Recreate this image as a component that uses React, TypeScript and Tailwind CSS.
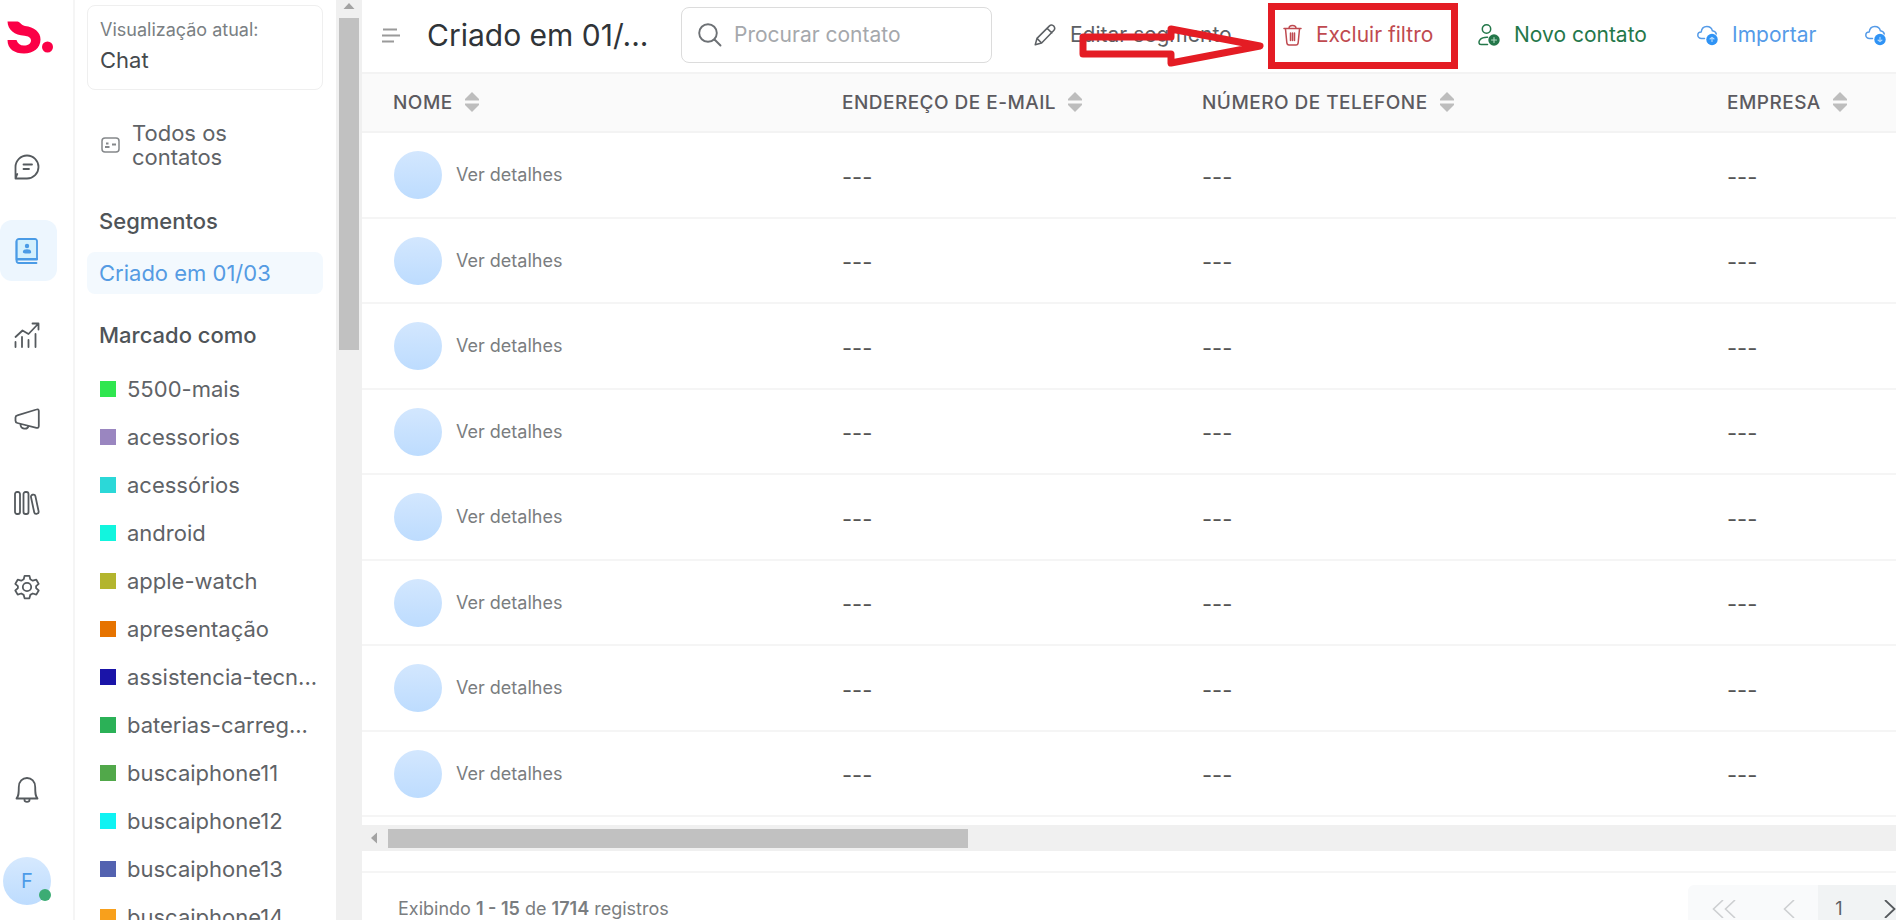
import { useState } from 'react';
import type { ReactNode } from 'react';

const tags = [
  { name: '5500-mais', color: '#2fe64f' },
  { name: 'acessorios', color: '#9a86c0' },
  { name: 'acessórios', color: '#2bd8d8' },
  { name: 'android', color: '#12f5de' },
  { name: 'apple-watch', color: '#b3b52e' },
  { name: 'apresentação', color: '#e67300' },
  { name: 'assistencia-tecn...', color: '#1a14a8' },
  { name: 'baterias-carreg...', color: '#2bb157' },
  { name: 'buscaiphone11', color: '#51a84a' },
  { name: 'buscaiphone12', color: '#0ff3f3' },
  { name: 'buscaiphone13', color: '#5362b0' },
  { name: 'buscaiphone14', color: '#f8a01c' },
];

const rows = [1, 2, 3, 4, 5, 6, 7, 8];

function Icon({ size = 26, children }: { size?: number; children: ReactNode }) {
  return (
    <svg width={size} height={size} viewBox="0 0 26 26" fill="none" stroke="currentColor" strokeWidth="1.8" strokeLinecap="round" strokeLinejoin="round" className="shrink-0" aria-hidden="true">
      {children}
    </svg>
  );
}

function Logo() {
  return (
    <svg width="46" height="34" viewBox="0 0 46 34" aria-hidden="true">
      <path d="M0.5 0.5H10.500C13 .8 14 4 18 5C27 6 33.500 11 33.500 18.500C33.500 27 26.500 32.500 17 32.500C7.500 32.500 .5 28 .5 19H9.500C10.500 22.500 13 24.500 17 24.500C21 24.500 24 22.500 24 19.500C24 16.500 21 15 17.500 14.700C7.500 14 .8 9 .5 .5Z" fill="#fb0046" />
      <circle cx="40.500" cy="26" r="5.500" fill="#fb0046" />
    </svg>
  );
}

function Cloud({ up }: { up?: boolean }) {
  return (
    <svg width="21" height="21" viewBox="0 0 21 21" fill="none" stroke="currentColor" strokeWidth="1.500" strokeLinecap="round" strokeLinejoin="round" className="shrink-0" aria-hidden="true">
      <path d="M7.500 13.500H4.500C2.300 13.500 .8 12 .8 10.200C.8 8.300 2.300 7 4.200 7C4.600 3.800 6.800 1.500 9.800 1.500C12.700 1.500 14.800 3.200 15.400 5.800C17.300 6 18.800 7.200 19.300 9" />
      <circle cx="15" cy="14.500" r="5.700" fill="#2f93f5" stroke="none" />
      {up ? <path d="M13 14L15 12.300L17 14M15 12.500V16.500" stroke="#b9dcfc" strokeWidth="1.100" /> : <path d="M13 15L15 16.700L17 15M15 12.300V16.500" stroke="#b9dcfc" strokeWidth="1.100" />}
    </svg>
  );
}

function Sort() {
  return (
    <svg width="14" height="20" viewBox="0 0 14 20" fill="#bdbdbd" className="shrink-0" aria-hidden="true">
      <path d="M7 0L14 7V8.500H0V7Z" />
      <path d="M7 20L14 13V11.500H0V13Z" />
    </svg>
  );
}

const navItems = [
  {
    label: 'Conversas',
    icon: <Icon><path d="M1.500 24.500V13A11.500 11.500 0 1 1 13 24.500H1.500L3.300 20M9.500 10.500H18M9.500 15H15" /></Icon>,
  },
  {
    label: 'Contatos',
    icon: (
      <Icon>
        <path d="M23 21.500V3A2 2 0 0 0 21 1H5A2.500 2.500 0 0 0 2.500 3.500V21.500Z" fill="#d3f0fd" />
        <path d="M2.500 3.500V22.500A2.500 2.500 0 0 0 5 25H22.500M2.500 22.500A2 2 0 0 1 4.500 21H23" />
        <circle cx="13" cy="8" r="2.200" fill="currentColor" stroke="none" />
        <path d="M8.800 14C8.800 12 10.800 11.300 13 11.300S17.200 12 17.200 14S15 15.500 13 15.500S8.800 15.500 8.800 14Z" fill="currentColor" stroke="none" />
      </Icon>
    ),
  },
  {
    label: 'Relatórios',
    icon: <Icon><path d="M1.500 15L8.500 8.500L14.500 12L24.500 1.500M18.500 1.500H24.500V7.500M1.500 20V25M8 15V25M14.500 18V25M21.500 12V25" /></Icon>,
  },
  {
    label: 'Campanhas',
    icon: <Icon><path d="M1.500 11.500C1.500 10.200 2 9.600 3.300 9.300L22.500 3.500C24 3 24.800 3.500 24.800 5V20C24.800 21.500 24 22.200 22.500 21.800L3.300 17C2 16.700 1.500 16 1.500 14.800ZM6.500 18.200C6.500 23.500 13.500 24 14.500 20" /></Icon>,
  },
  {
    label: 'Biblioteca',
    icon: (
      <Icon>
        <rect x="1" y="2" width="5" height="22" rx="2" />
        <rect x="9.500" y="2" width="5" height="22" rx="2" />
        <rect x="18.500" y="4.500" width="4.500" height="19.500" rx="2" transform="rotate(-12 20.700 14)" />
      </Icon>
    ),
  },
  {
    label: 'Configurações',
    icon: (
      <Icon>
        <circle cx="13" cy="13" r="4.200" />
        <path d="M10.600 1.800H15.400L16.300 5.300L18.800 6.700L22.300 5.700L24.700 9.900L22.100 12.200V14.200L24.700 16.500L22.300 20.600L18.800 19.500L16.300 20.900L15.400 24.300H10.600L9.700 20.900L7.200 19.500L3.700 20.600L1.300 16.500L3.900 14.200V12.200L1.300 9.900L3.700 5.700L7.200 6.700L9.700 5.300Z" />
      </Icon>
    ),
  },
];

function Rail() {
  return (
    <nav className="flex h-full w-[75px] shrink-0 flex-col border-r-2 border-[#f5f5f5] text-[#555a5e]">
      <a href="#" aria-label="Início" className="ml-[7px] mt-[21px] block">
        <Logo />
      </a>
      <div className="mt-[81px] flex flex-col gap-[23px]">
        {navItems.map((item, i) => (
          <button
            key={item.label}
            aria-label={item.label}
            className={`flex h-[61px] w-[57px] items-center justify-center rounded-xl pr-1 ${i === 1 ? 'bg-[#edf6fe] text-[#4a9be6]' : ''}`}
          >
            {item.icon}
          </button>
        ))}
      </div>
      <div className="mb-[15px] mt-auto flex w-[54px] flex-col items-center gap-[54px]">
        <button aria-label="Notificações">
          <Icon><path d="M2.500 21.500C4.500 19.500 4.800 17.500 4.800 10C4.800 4.500 8.500 1 13 1S21.200 4.500 21.200 10C21.200 17.500 21.500 19.500 23.500 21.500ZM10.500 22V23C10.500 25.500 15.500 25.500 15.500 23V22" /></Icon>
        </button>
        <button aria-label="Perfil" className="relative h-12 w-12 rounded-full bg-linear-to-b from-[#d6e9fe] to-[#bddcfe] text-xl text-[#4c9be8]">
          F
          <span className="absolute bottom-1 right-0 h-3 w-3 rounded-full bg-[#3cac74]" />
        </button>
      </div>
    </nav>
  );
}

function Sidebar() {
  return (
    <aside className="flex h-full w-[287px] shrink-0">
      <div className="min-w-0 flex-1 overflow-hidden pl-3 pr-[13px] text-[22px] text-[#5f6367]">
        <div className="mt-[5px] h-[85px] rounded-lg border border-[#efefef] px-3 pt-3">
          <p className="text-lg leading-6 text-[#7a7f83]">Visualização atual:</p>
          <p className="leading-9 text-[#45494d]">Chat</p>
        </div>
        <a href="#" className="mt-[31px] flex h-12 items-center gap-3 pl-[14px] leading-6">
          <svg width="19" height="16" viewBox="0 0 19 16" fill="none" stroke="#85888b" strokeWidth="1.500" className="shrink-0" aria-hidden="true">
            <rect x="1" y="1" width="17" height="14" rx="3" />
            <path d="M4 10H8.500M5 6.500H7.500M11 7.500H15" strokeWidth="2" />
          </svg>
          <span className="w-[100px]">Todos os contatos</span>
        </a>
        <h2 className="mt-[38px] pl-3 font-medium leading-7 text-[#4f5458]">Segmentos</h2>
        <a href="#" className="mt-[17px] block h-[42px] rounded-lg bg-[#f3f9fe] pl-3 leading-[42px] text-[#559be3]">Criado em 01/03</a>
        <h2 className="mt-[27px] pl-3 font-medium leading-7 text-[#4f5458]">Marcado como</h2>
        <ul className="mt-4">
          {tags.map((t) => (
            <li key={t.name}>
              <a href="#" className="flex h-12 items-center gap-[11px] whitespace-nowrap pl-[13px]">
                <span className="h-4 w-4 shrink-0" style={{ backgroundColor: t.color }} />
                {t.name}
              </a>
            </li>
          ))}
        </ul>
      </div>
      <div className="w-[26px] shrink-0 bg-[#f0f0f0]">
        <svg width="26" height="18" viewBox="0 0 26 18" aria-hidden="true">
          <path d="M13 3L18.500 9H7.500Z" fill="#a3a3a3" />
        </svg>
        <div className="ml-[3px] h-[332px] w-5 bg-[#c1c1c1]" />
      </div>
    </aside>
  );
}

function Toolbar() {
  const [search, setSearch] = useState('');

  return (
    <header className="flex h-[72px] shrink-0 items-center overflow-hidden whitespace-nowrap pb-0.5 text-[21px] leading-[30px]">
      <button aria-label="Menu" className="ml-5 w-[19px] shrink-0 text-[#9a9a9a]">
        <svg width="19" height="15" viewBox="0 0 19 15" stroke="currentColor" strokeWidth="1.800" aria-hidden="true">
          <path d="M1 1.500H15M0 7.500H18M0 13.500H12" />
        </svg>
      </button>
      <h1 className="ml-[26px] w-[228px] shrink-0 text-3xl text-[#303438]">Criado em 01/...</h1>
      <label className="ml-[26px] flex h-[56px] w-[311px] shrink-0 items-center gap-3 rounded-lg border border-[#dcdcdc] pl-4">
        <svg width="24" height="24" viewBox="0 0 24 24" fill="none" stroke="#6d7175" strokeWidth="1.900" strokeLinecap="round" className="shrink-0" aria-hidden="true">
          <circle cx="10" cy="10" r="8.800" />
          <path d="M16.500 16.500L22.500 22.500" />
        </svg>
        <input
          type="text"
          aria-label="Procurar contato"
          placeholder="Procurar contato"
          value={search}
          onChange={(e) => setSearch(e.target.value)}
          className="w-full min-w-0 pr-3 placeholder-[#a5a8ac] outline-none"
        />
      </label>
      <div className="ml-[42px] flex items-center gap-12">
        <button className="flex w-[201px] shrink-0 items-center gap-[14px] text-[#5c6064]">
          <Icon size={22}><path d="M1.500 24.500L3.500 17L18 2.500C20 .5 22 1 23.300 2.500S25 6 23.300 7.800L9 22.500ZM15.500 5L21 10.500M3.500 17L9 22.500" /></Icon>
          Editar segmento
        </button>
        <button className="relative flex w-[147px] shrink-0 items-center gap-[14px] text-[#bf4a50]">
          <svg width="19" height="22" viewBox="0 0 19 22" fill="none" stroke="currentColor" strokeWidth="1.500" strokeLinecap="round" strokeLinejoin="round" className="shrink-0" aria-hidden="true">
            <path d="M1 4.500H18M6 4.500C6 .5 13 .5 13 4.500M2.500 5L3.800 18.500C4 20.300 4.500 21 6 21H13C14.500 21 15 20.300 15.200 18.500L16.500 5M7.500 9V16.500M9.500 9V16.500M11.500 9V16.500" />
          </svg>
          Excluir filtro
          <span className="pointer-events-none absolute -left-[15px] -top-[17px] h-[66px] w-[190px] border-[7px] border-[#e41c24]" />
          <svg width="186" height="44" viewBox="0 0 186 44" fill="none" stroke="#e41c24" strokeWidth="7" strokeLinejoin="round" className="pointer-events-none absolute -left-[205px] top-1" aria-hidden="true">
            <path d="M5 13H93V5L182 22L93 39V30H5Z" />
          </svg>
        </button>
        <button className="flex w-[171px] shrink-0 items-center gap-[14px] text-[#24774a]">
          <svg width="22" height="22" viewBox="0 0 22 22" fill="none" stroke="currentColor" strokeWidth="1.500" strokeLinecap="round" className="shrink-0" aria-hidden="true">
            <circle cx="8.500" cy="5" r="4.200" />
            <path d="M9.500 20.500H3C.5 20.500 .5 17.500 2 15.800C3.500 14 6 13.200 9.500 13.300" />
            <circle cx="16" cy="16" r="5.700" fill="currentColor" stroke="none" />
            <path d="M13.500 16H18.500M16 13.500V18.500" stroke="#b5dcc6" strokeWidth="1.100" />
          </svg>
          Novo contato
        </button>
        <button className="flex w-[120px] shrink-0 items-center gap-[14px] text-[#559be8]">
          <Cloud up />
          Importar
        </button>
        <button aria-label="Exportar" className="shrink-0 text-[#559be8]">
          <Cloud />
        </button>
      </div>
    </header>
  );
}

function ContactsTable() {
  return (
    <table className="w-full table-fixed border-collapse text-left text-lg">
      <colgroup>
        <col className="w-[480px]" />
        <col className="w-[360px]" />
        <col className="w-[525px]" />
        <col />
      </colgroup>
      <thead>
        <tr className="h-[59px] border-y-2 border-[#f3f3f3] bg-[#fafafa] text-[#5c5a60]">
          {['NOME', 'ENDEREÇO DE E-MAIL', 'NÚMERO DE TELEFONE', 'EMPRESA'].map((col, i) => (
            <th key={col} className={`whitespace-nowrap p-0 text-[19px] font-medium tracking-wide ${i === 0 ? 'pl-[31px]' : ''}`}>
              <button className="flex items-center gap-3">
                {col}
                <Sort />
              </button>
            </th>
          ))}
        </tr>
      </thead>
      <tbody>
        {rows.map((r) => (
          <tr key={r} className="border-b-2 border-[#f5f5f5] odd:h-[86px] even:h-[85px]">
            <td className="p-0 pl-8">
              <div className="flex items-center gap-[14px]">
                <span className="h-12 w-12 rounded-full bg-linear-to-b from-[#d3e7fe] to-[#bddcfe]" />
                <a href="#" className="text-[#7a7d80]">Ver detalhes</a>
              </div>
            </td>
            <td className="p-0 pt-1 text-[22px] text-[#555]">---</td>
            <td className="p-0 pt-1 text-[22px] text-[#555]">---</td>
            <td className="p-0 pt-1 text-[22px] text-[#555]">---</td>
          </tr>
        ))}
      </tbody>
    </table>
  );
}

function Pager() {
  return (
    <div className="flex h-12 shrink-0 overflow-hidden rounded-tl-md bg-[#f9fafb] text-[#cdcfd1]">
      <button aria-label="Primeira página" className="flex w-[72px] items-center justify-center">
        <svg width="24" height="18" viewBox="0 0 24 18" fill="none" stroke="currentColor" strokeWidth="1.600" aria-hidden="true">
          <path d="M11 0L1.500 9L11 18M23 0L13.500 9L23 18" />
        </svg>
      </button>
      <button aria-label="Página anterior" className="flex w-[58px] items-center justify-center">
        <svg width="12" height="18" viewBox="0 0 12 18" fill="none" stroke="currentColor" strokeWidth="1.600" aria-hidden="true">
          <path d="M11 0L1.500 9L11 18" />
        </svg>
      </button>
      <button className="w-[42px] bg-[#f1f3f4] text-lg text-[#5c6064]">1</button>
      <button aria-label="Próxima página" className="flex w-[36px] items-center justify-end bg-[#f1f3f4] text-[#55595d]">
        <svg width="12" height="18" viewBox="0 0 12 18" fill="none" stroke="currentColor" strokeWidth="1.800" aria-hidden="true">
          <path d="M1 0L10.500 9L1 18" />
        </svg>
      </button>
    </div>
  );
}

export default function App() {
  return (
    <div className="flex h-screen overflow-hidden bg-white font-['Inter',sans-serif]">
      <Rail />
      <Sidebar />
      <main className="flex min-w-0 flex-1 flex-col overflow-hidden">
        <Toolbar />
        <ContactsTable />
        <div className="mt-2 flex h-[26px] shrink-0 items-center bg-[#f0f0f0]">
          <svg width="26" height="26" viewBox="0 0 26 26" aria-hidden="true">
            <path d="M9 13L15 7.500V18.500Z" fill="#a3a3a3" />
          </svg>
          <div className="h-[19px] w-[580px] bg-[#c1c1c1]" />
        </div>
        <footer className="mt-5 flex justify-between border-t-2 border-[#f5f5f5] pt-3">
          <p className="pl-9 pt-3 text-lg leading-6 text-[#7a7d80]">
            Exibindo <b className="font-semibold">1 - 15</b> de <b className="font-semibold">1714</b> registros
          </p>
          <Pager />
        </footer>
      </main>
    </div>
  );
}
